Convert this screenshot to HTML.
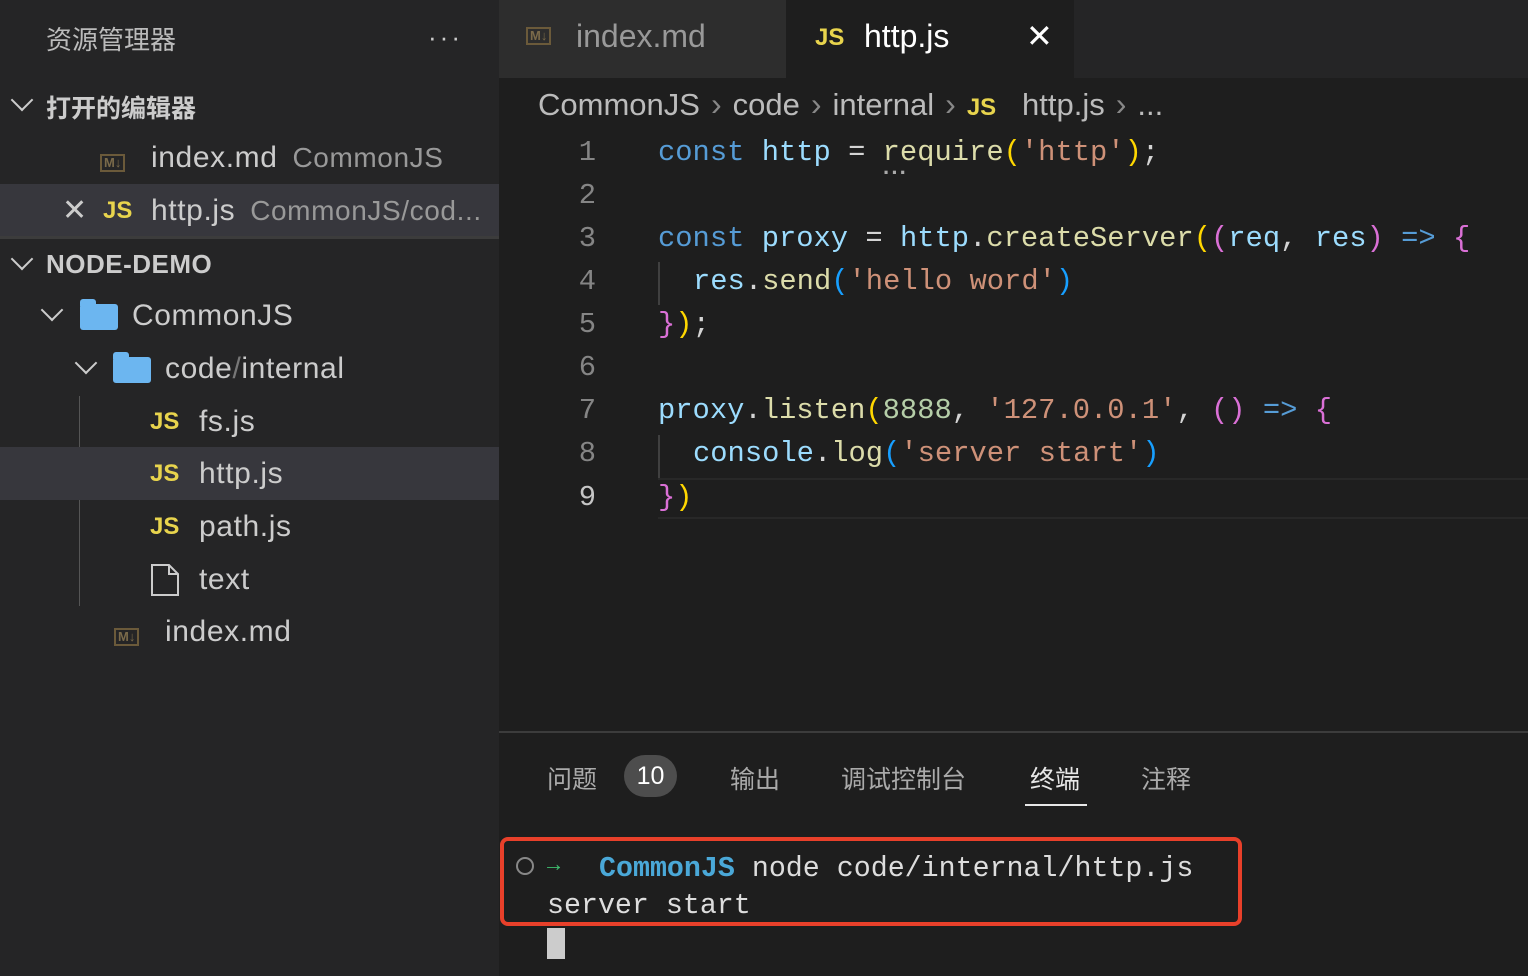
<!DOCTYPE html>
<html><head><meta charset="utf-8"><style>
*{margin:0;padding:0;box-sizing:border-box}
body{width:1528px;height:976px;background:#1e1e1e;font-family:"Liberation Sans","Noto Sans CJK SC",sans-serif;color:#ccc;position:relative;overflow:hidden}
.abs{position:absolute;white-space:nowrap}
#side{position:absolute;left:0;top:0;width:499px;height:976px;background:#252526}
.row{position:absolute;left:0;width:499px;height:53px;line-height:53px;font-size:30px;letter-spacing:0.6px;color:#ccc}
.js{color:#e8d44d;font-weight:bold;font-size:24px;font-family:"Liberation Sans",sans-serif;letter-spacing:0}
.md{display:inline-block;border:2px solid #6b5a3a;color:#7a6a4a;font-size:13px;font-weight:bold;line-height:14px;padding:0 2px;letter-spacing:0}
.chev{position:absolute;width:16px;height:16px;border-right:2px solid #ccc;border-bottom:2px solid #ccc;transform:rotate(45deg)}
.mono{font-family:"Liberation Mono","DejaVu Sans Mono",monospace;font-size:28.8px}
.ln{position:absolute;left:540px;width:56px;text-align:right;color:#858585}
.code{position:absolute;left:658px}
.k{color:#569cd6}.v{color:#9cdcfe}.f{color:#dcdcaa}.s{color:#ce9178}.y{color:#ffd700}.p{color:#da70d6}.b{color:#179fff}.w{color:#d4d4d4}.n{color:#b5cea8}
.folder{display:inline-block;width:38px;height:26px;background:#6cb6f0;border-radius:3px;position:relative;vertical-align:middle}
.folder:before{content:"";position:absolute;left:0;top:-5px;width:16px;height:7px;background:#6cb6f0;border-radius:3px 3px 0 0}
.sep{color:#888;margin:0 11px;font-size:32px}
</style></head><body>
<div id="side">
 <div class="abs" style="left:46px;top:20px;font-size:26px;color:#bbb">资源管理器</div>
 <div class="abs" style="left:428px;top:22px;font-size:26px;color:#ccc;letter-spacing:3px">···</div>
 <div class="chev" style="left:14px;top:92px"></div>
 <div class="abs" style="left:46px;top:89px;font-size:25px;font-weight:bold;color:#ccc">打开的编辑器</div>
 <div class="row" style="top:131px"><span class="abs" style="left:100px;top:0"><span class="md">M↓</span></span><span class="abs" style="left:151px">index.md <span style="color:#999;font-size:28px;margin-left:6px">CommonJS</span></span></div>
 <div class="row" style="top:184px;background:#37373d"><span class="abs" style="left:62px;font-size:30px">✕</span><span class="abs js" style="left:103px">JS</span><span class="abs" style="left:151px">http.js <span style="color:#999;font-size:28px;margin-left:6px">CommonJS/cod...</span></span></div>
 <div class="abs" style="left:0;top:236px;width:499px;height:3px;background:#3c3c3c"></div>
 <div class="chev" style="left:14px;top:251px"></div>
 <div class="abs" style="left:46px;top:249px;font-size:26px;font-weight:bold;color:#ccc;letter-spacing:0.5px">NODE-DEMO</div>
 <div class="chev" style="left:44px;top:302px"></div>
 <div class="row" style="top:289px"><span class="abs" style="left:80px"><span class="folder"></span></span><span class="abs" style="left:132px">CommonJS</span></div>
 <div class="chev" style="left:78px;top:355px"></div>
 <div class="row" style="top:342px"><span class="abs" style="left:113px"><span class="folder"></span></span><span class="abs" style="left:165px">code<span style="color:#777">/</span>internal</span></div>
 <div class="abs" style="left:79px;top:396px;width:1px;height:210px;background:#555"></div>
 <div class="row" style="top:395px"><span class="abs js" style="left:150px">JS</span><span class="abs" style="left:199px">fs.js</span></div>
 <div class="row" style="top:447px;background:#37373d"><span class="abs js" style="left:150px">JS</span><span class="abs" style="left:199px">http.js</span></div>
 <div class="row" style="top:500px"><span class="abs js" style="left:150px">JS</span><span class="abs" style="left:199px">path.js</span></div>
 <div class="row" style="top:553px"><svg class="abs" style="left:150px;top:10px" width="30" height="34" viewBox="0 0 30 34"><path d="M2 2H19L28 11V32H2Z M19 2V11H28" fill="none" stroke="#ccc" stroke-width="2"/></svg><span class="abs" style="left:199px">text</span></div>
 <div class="row" style="top:605px"><span class="abs" style="left:114px;top:0"><span class="md">M↓</span></span><span class="abs" style="left:165px">index.md</span></div>
</div>
<!-- tabs -->
<div class="abs" style="left:499px;top:0;width:1029px;height:78px;background:#252526"></div>
<div class="abs" style="left:499px;top:0;width:287px;height:78px;background:#2d2d2d"></div>
<div class="abs" style="left:526px;top:27px"><span class="md">M↓</span></div>
<div class="abs" style="left:576px;top:18px;font-size:32px;color:#999">index.md</div>
<div class="abs" style="left:786px;top:0;width:288px;height:78px;background:#1e1e1e"></div>
<div class="abs js" style="left:815px;top:24px">JS</div>
<div class="abs" style="left:864px;top:18px;font-size:32px;color:#fff">http.js</div>
<div class="abs" style="left:1026px;top:17px;font-size:32px;color:#fff">✕</div>
<!-- breadcrumb -->
<div class="abs" style="left:538px;top:86px;font-size:31px;color:#bbb">CommonJS<span class="sep">›</span>code<span class="sep">›</span>internal<span class="sep">›</span><span class="js">JS</span>&nbsp;&nbsp; http.js<span class="sep">›</span>...</div>
<!-- code -->
<div class="abs" style="left:658px;top:478px;width:870px;height:41px;border-top:2px solid #282828;border-bottom:2px solid #282828"></div>
<div class="abs" style="left:658px;top:262px;width:2px;height:43px;background:#404040"></div>
<div class="abs" style="left:658px;top:435px;width:2px;height:43px;background:#404040"></div>
<div class="mono">
<div class="ln abs" style="top:136px">1</div><div class="ln abs" style="top:179px">2</div><div class="ln abs" style="top:222px">3</div><div class="ln abs" style="top:265px">4</div><div class="ln abs" style="top:308px">5</div><div class="ln abs" style="top:351px">6</div><div class="ln abs" style="top:394px">7</div><div class="ln abs" style="top:437px">8</div><div class="ln abs" style="top:481px;color:#c6c6c6">9</div>
<div class="code abs" style="top:136px"><span class="k">const</span> <span class="v">http</span> <span class="w">=</span> <span class="f">require</span><span class="y">(</span><span class="s">'http'</span><span class="y">)</span><span class="w">;</span></div>
<div class="code abs" style="top:222px"><span class="k">const</span> <span class="v">proxy</span> <span class="w">=</span> <span class="v">http</span><span class="w">.</span><span class="f">createServer</span><span class="y">(</span><span class="p">(</span><span class="v">req</span><span class="w">,</span> <span class="v">res</span><span class="p">)</span> <span class="k">=&gt;</span> <span class="p">{</span></div>
<div class="code abs" style="top:265px;left:693px"><span class="v">res</span><span class="w">.</span><span class="f">send</span><span class="b">(</span><span class="s">'hello word'</span><span class="b">)</span></div>
<div class="code abs" style="top:308px"><span class="p">}</span><span class="y">)</span><span class="w">;</span></div>
<div class="code abs" style="top:394px"><span class="v">proxy</span><span class="w">.</span><span class="f">listen</span><span class="y">(</span><span class="n">8888</span><span class="w">,</span> <span class="s">'127.0.0.1'</span><span class="w">,</span> <span class="p">()</span> <span class="k">=&gt;</span> <span class="p">{</span></div>
<div class="code abs" style="top:437px;left:693px"><span class="v">console</span><span class="w">.</span><span class="f">log</span><span class="b">(</span><span class="s">'server start'</span><span class="b">)</span></div>
<div class="code abs" style="top:481px"><span class="p">}</span><span class="y">)</span></div>
</div>
<div class="abs" style="left:883px;top:160px;font-size:22px;font-weight:bold;color:#aaa;letter-spacing:1px">···</div>
<!-- panel -->
<div class="abs" style="left:499px;top:731px;width:1029px;height:2px;background:#3c3c3c"></div>
<div class="abs" style="left:547px;top:760px;font-size:25px;color:#aaa">问题</div>
<div class="abs" style="left:624px;top:755px;width:53px;height:42px;border-radius:21px;background:#4d4d4d;color:#fff;font-size:25px;text-align:center;line-height:42px">10</div>
<div class="abs" style="left:730px;top:760px;font-size:25px;color:#aaa">输出</div>
<div class="abs" style="left:841px;top:760px;font-size:25px;color:#aaa">调试控制台</div>
<div class="abs" style="left:1030px;top:760px;font-size:25px;color:#e7e7e7">终端</div>
<div class="abs" style="left:1025px;top:804px;width:62px;height:2px;background:#e7e7e7"></div>
<div class="abs" style="left:1141px;top:760px;font-size:25px;color:#aaa">注释</div>
<div class="abs" style="left:500px;top:837px;width:742px;height:89px;border:4px solid #e8402a;border-radius:8px"></div>
<div class="abs" style="left:516px;top:857px;width:18px;height:18px;border:2px solid #888;border-radius:50%"></div>
<div class="mono" style="font-size:28.3px">
<div class="abs" style="left:547px;top:853px;color:#3fbf6f;font-size:22px;font-weight:bold">→</div>
<div class="abs" style="left:599px;top:853px"><span style="color:#4aa8d8;font-weight:bold">CommonJS</span> <span style="color:#ddd">node code/internal/http.js</span></div>
<div class="abs" style="left:547px;top:890px;color:#ddd">server start</div>
</div>
<div class="abs" style="left:547px;top:928px;width:18px;height:31px;background:#ccc"></div>
</body></html>
